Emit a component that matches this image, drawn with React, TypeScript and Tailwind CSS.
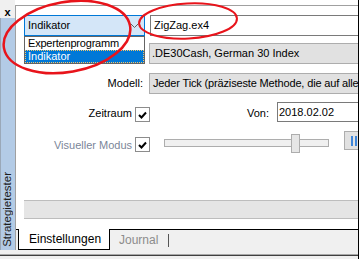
import React from "react";

function Check() {
  return (
    <div className="flex h-[15px] w-[15px] shrink-0 items-center justify-center border border-[#8c8c8c] bg-white">
      <svg width="9" height="8" viewBox="0 0 9 8">
        <path d="M1 4 L3.5 6.5 L8 1.5" fill="none" stroke="#000" strokeWidth="2" />
      </svg>
    </div>
  );
}

export default function App() {
  return (
    <div className="relative flex h-[259px] w-[361px] overflow-hidden bg-white font-['Liberation_Sans',Arial,sans-serif] text-[11px] leading-none text-black">
      <div className="flex w-[358px] flex-col">
        <div className="flex min-h-0 flex-1">
          {/* left vertical tab strip */}
          <div className="flex w-[15px] shrink-0 flex-col">
            <div className="flex h-[18px] justify-center bg-[#f0f0f0] pt-[7px] text-[11px] font-bold">x</div>
            <div className="flex flex-1 flex-col justify-end border-l border-[#9aa8b8] bg-[#b3cbe6] pb-[3px] pl-[1px]">
              <span className="rotate-180 text-[11.5px] text-[#1c1c1c] [writing-mode:vertical-rl]">Strategietester</span>
            </div>
          </div>

          {/* main panel */}
          <div className="flex min-w-0 flex-1 flex-col pt-[5px]">
            <div className="flex min-h-0 flex-1 flex-col overflow-hidden border-l border-t border-[#a0a0a0]">
              <div className="flex flex-1 flex-col pt-[9px]">
                {/* row 1 */}
                <div className="flex h-[21px] pl-[8px]">
                  <div className="flex w-[121px] shrink-0 items-center justify-between border border-[#0078d7] bg-[#d4e6f8] pl-[3px] pr-[5px]">
                    <span>Indikator</span>
                    <svg width="9" height="6" viewBox="0 0 9 6">
                      <path d="M0.5 0.5 L4.5 4.5 L8.5 0.5" fill="none" stroke="#606060" strokeWidth="1" />
                    </svg>
                  </div>
                  <div className="ml-[5px] flex w-[260px] shrink-0 items-center border border-[#7a7a7a] bg-white pl-[3px]">ZigZag.ex4</div>
                </div>

                {/* row 2 */}
                <div className="mt-[7px] flex h-[21px] pl-[133px]">
                  <div className="flex w-[260px] shrink-0 items-center border border-[#adadad] bg-[#e1e1e1] pl-[2px]">.DE30Cash, German 30 Index</div>
                </div>

                {/* row 3 */}
                <div className="mt-[9px] flex h-[21px]">
                  <div className="flex w-[127px] shrink-0 items-center justify-end">Modell:</div>
                  <div className="ml-[6px] flex w-[260px] shrink-0 items-center overflow-hidden whitespace-nowrap border border-[#adadad] bg-[#e1e1e1] pl-[3px] tracking-[-0.15px]">
                    Jeder Tick (präziseste Methode, die auf alle
                  </div>
                </div>

                {/* row 4 */}
                <div className="mt-[8px] flex h-[20px]">
                  <div className="flex w-[116px] shrink-0 items-end justify-end pb-[3px]">Zeitraum</div>
                  <div className="ml-[3px] flex items-end">
                    <Check />
                  </div>
                  <div className="flex w-[127px] shrink-0 items-end justify-end pb-[3px] pr-[8px]">Von:</div>
                  <div className="flex w-[120px] shrink-0 items-center border border-[#7a7a7a] bg-white pl-[1px]">2018.02.02</div>
                </div>

                {/* row 5 */}
                <div className="mt-[9px] flex h-[21px] items-start">
                  <div className="flex w-[116px] shrink-0 justify-end pt-[9px] text-[#7b8699]">Visueller Modus</div>
                  <div className="ml-[3px] mt-[6px]">
                    <Check />
                  </div>
                  <div className="relative ml-[14px] mt-[8px] h-[8px] w-[165px] shrink-0 border border-[#adadad] bg-[#f0f0f0]">
                    <div className="absolute left-[126px] top-[-6px] h-[19px] w-[9px] border border-[#adadad] bg-[#e6e6e6]" />
                  </div>
                  <div className="ml-[15px] flex h-[19px] w-[30px] shrink-0 items-center gap-[2px] border border-[#adadad] bg-[#e1e1e1] pl-[6px]">
                    <span className="h-[10px] w-[2px] bg-[#3f86d9]" />
                    <span className="h-[10px] w-[2px] bg-[#3f86d9]" />
                  </div>
                </div>

                {/* gray bar */}
                <div className="mb-[10px] ml-[8px] mt-auto h-[19px] border-y border-[#bdbdbd] bg-[#e5e5e5]" />
              </div>

              {/* tabs */}
              <div className="flex h-[21px] bg-[#f0f0f0]">
                <div className="w-[2px] border-t border-black" />
                <div className="flex w-[92px] items-center border-x border-b border-black bg-white pl-[10px] pb-[1px] text-[12px]">
                  Einstellungen
                </div>
                <div className="flex flex-1 items-center border-t border-black pl-[9px] text-[12px] text-[#8c8c8c]">
                  <span>Journal</span>
                  <span className="ml-[10px] h-[13px] w-px bg-[#555]" />
                </div>
              </div>
            </div>
          </div>
        </div>

        {/* bottom frame lines */}
        <div className="h-[9px] bg-[#f0f0f0]">
          <div className="mt-[4px] h-px bg-[#a8a8a8]" />
          <div className="h-px bg-[#404040]" />
        </div>
      </div>
      <div className="w-px bg-black" />
      <div className="w-[2px] bg-white" />

      {/* dropdown list */}
      <div className="absolute left-[24px] top-[36px] flex h-[28px] w-[121px] flex-col border border-[#646464] bg-white">
        <div className="flex h-[13px] items-center pl-[3px] tracking-[-0.2px]">Expertenprogramm</div>
        <div className="flex h-[13px] items-center border border-dotted border-[#f3c66a] bg-[#0078d7] pl-[2px] text-white">Indikator</div>
      </div>

      {/* red annotation ellipses */}
      <svg className="pointer-events-none absolute left-0 top-0" width="361" height="259" viewBox="0 0 361 259">
        <ellipse cx="67" cy="37" rx="64" ry="35" transform="rotate(-10 67 37)" fill="none" stroke="#e8141b" strokeWidth="2.5" />
        <ellipse cx="188" cy="21" rx="49" ry="17.5" transform="rotate(-3 188 21)" fill="none" stroke="#e8141b" strokeWidth="2" />
      </svg>
    </div>
  );
}
